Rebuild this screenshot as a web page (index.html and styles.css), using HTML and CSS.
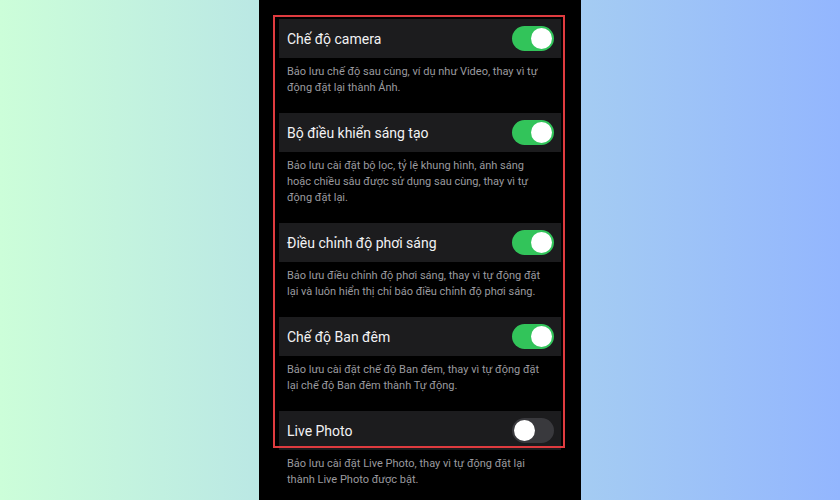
FILE: index.html
```html
<!DOCTYPE html>
<html lang="vi">
<head>
<meta charset="utf-8">
<title>Giữ cài đặt Camera</title>
<link rel="stylesheet" href="styles.css">
</head>
<body>
<div class="stage">
  <div class="phone">
    <div class="list">
      <div class="cell">
        <span class="title">Chế độ camera</span>
        <span class="switch on"><span class="knob"></span></span>
      </div>
      <p class="desc">Bảo lưu chế độ sau cùng, ví dụ như Video, thay vì tự động đặt lại thành Ảnh.</p>

      <div class="cell">
        <span class="title">Bộ điều khiển sáng tạo</span>
        <span class="switch on"><span class="knob"></span></span>
      </div>
      <p class="desc">Bảo lưu cài đặt bộ lọc, tỷ lệ khung hình, ánh sáng hoặc chiều sâu được sử dụng sau cùng, thay vì tự động đặt lại.</p>

      <div class="cell">
        <span class="title">Điều chỉnh độ phơi sáng</span>
        <span class="switch on"><span class="knob"></span></span>
      </div>
      <p class="desc">Bảo lưu điều chỉnh độ phơi sáng, thay vì tự động đặt lại và luôn hiển thị chỉ báo điều chỉnh độ phơi sáng.</p>

      <div class="cell">
        <span class="title">Chế độ Ban đêm</span>
        <span class="switch on"><span class="knob"></span></span>
      </div>
      <p class="desc">Bảo lưu cài đặt chế độ Ban đêm, thay vì tự động đặt lại chế độ Ban đêm thành Tự động.</p>

      <div class="cell">
        <span class="title">Live Photo</span>
        <span class="switch off"><span class="knob"></span></span>
      </div>
      <p class="desc">Bảo lưu cài đặt Live Photo, thay vì tự động đặt lại thành Live Photo được bật.</p>
    </div>
    <div class="highlight"></div>
  </div>
</div>
</body>
</html>
```
FILE: styles.css
```css
html, body {
  margin: 0;
  padding: 0;
  height: 100%;
}
body {
  background: linear-gradient(to right, #ccfed9, #93b6fe);
  font-family: Roboto, "Noto Sans", "Liberation Sans", sans-serif;
  overflow: hidden;
}
.stage {
  display: flex;
  justify-content: center;
  height: 500px;
}
.phone {
  position: relative;
  width: 322px;
  height: 500px;
  background: #000;
  box-sizing: border-box;
  padding: 19px 20px 0 20px;
}
.list {
  display: flex;
  flex-direction: column;
}
.cell {
  height: 39px;
  background: #1c1c1e;
  display: flex;
  align-items: center;
  justify-content: space-between;
  padding: 0 7px 0 8px;
}
.title {
  color: #f2f2f4;
  font-size: 14px;
}
.desc {
  margin: 0;
  padding: 6px 16px 17px 8px;
  color: #9a9a9f;
  font-size: 11px;
  line-height: 16px;
}
.switch {
  width: 42px;
  height: 25px;
  border-radius: 13px;
  display: flex;
  align-items: center;
  padding: 0 2px;
  box-sizing: border-box;
}
.switch.on {
  background: #32c45a;
  justify-content: flex-end;
}
.switch.off {
  background: #39393d;
  justify-content: flex-start;
}
.knob {
  width: 21px;
  height: 21px;
  border-radius: 50%;
  background: #fff;
}
.highlight {
  position: absolute;
  left: 14px;
  top: 15px;
  width: 292px;
  height: 433px;
  box-sizing: border-box;
  border: 2.5px solid #df3b3f;
  pointer-events: none;
}
```
